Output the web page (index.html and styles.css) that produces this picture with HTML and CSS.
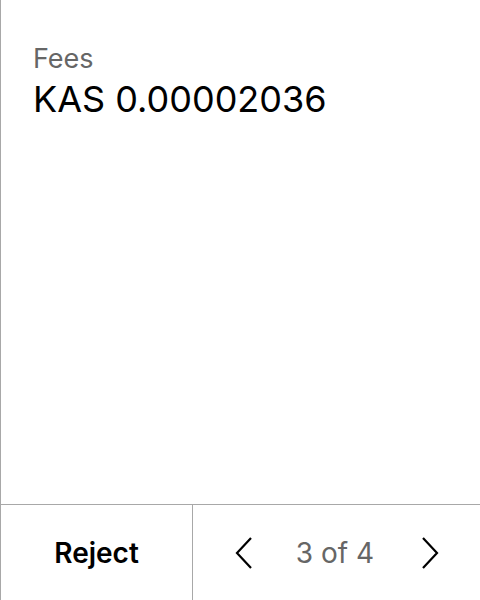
FILE: index.html
```html
<!DOCTYPE html>
<html>
<head>
<meta charset="utf-8">
<link rel="stylesheet" href="styles.css">
</head>
<body>
<div class="screen">
  <div class="content">
    <div class="label">Fees</div>
    <div class="value">KAS 0.00002036</div>
  </div>
  <div class="footer">
    <div class="reject">Reject</div>
    <div class="pager">
      <svg class="chev" width="18" height="32" viewBox="0 0 18 32"><path d="M16 1 L2 16 L16 31" fill="none" stroke="#000" stroke-width="2.2"/></svg>
      <span class="count">3 of 4</span>
      <svg class="chev" width="18" height="32" viewBox="0 0 18 32"><path d="M2 1 L16 16 L2 31" fill="none" stroke="#000" stroke-width="2.2"/></svg>
    </div>
  </div>
</div>
</body>
</html>
```
FILE: styles.css
```css
html, body {
  margin: 0;
  padding: 0;
  background: #fff;
}
.screen {
  width: 480px;
  height: 600px;
  box-sizing: border-box;
  border-left: 1px solid #a8a8a8;
  display: flex;
  flex-direction: column;
  font-family: Inter, "Liberation Sans", sans-serif;
}
.content {
  flex: 1;
  padding: 42px 0 0 32px;
}
.label {
  font-size: 27px;
  line-height: 33px;
  color: #666;
}
.value {
  font-size: 36px;
  line-height: 44px;
  color: #000;
  margin-top: 2px;
}
.footer {
  height: 95px;
  border-top: 1px solid #a8a8a8;
  display: flex;
}
.reject {
  width: 191px;
  border-right: 1px solid #a8a8a8;
  display: flex;
  align-items: center;
  justify-content: center;
  font-size: 28px;
  font-weight: 600;
  color: #000;
}
.pager {
  flex: 1;
  display: flex;
  align-items: center;
  padding: 0 41px 0 42px;
  justify-content: space-between;
}
.count {
  font-size: 28px;
  color: #666;
  margin-right: 4px;
}
.chev {
  display: block;
}
```
